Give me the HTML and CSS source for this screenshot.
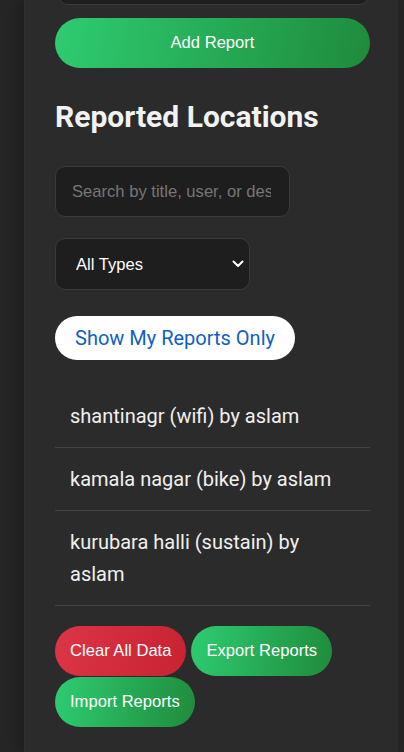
FILE: index.html
```html
<!DOCTYPE html>
<html lang="en">
<head>
<meta charset="utf-8">
<title>Reported Locations</title>
<link rel="stylesheet" href="styles.css">
</head>
<body>
<div class="page">
  <aside class="panel">
    <div class="top-input"></div>
    <button class="btn btn-green btn-wide">Add Report</button>
    <h2 class="heading">Reported Locations</h2>
    <input class="search" type="text" placeholder="Search by title, user, or description">
    <div class="select-wrap">
      <select class="select">
        <option>All Types</option>
      </select>
      <svg class="chev" viewBox="0 0 12 8" width="12" height="8"><path d="M1.5 1.5 L6 6 L10.5 1.5" fill="none" stroke="#fff" stroke-width="2" stroke-linecap="round" stroke-linejoin="round"/></svg>
    </div>
    <button class="toggle">Show My Reports Only</button>
    <ul class="list">
      <li>shantinagr (wifi) by aslam</li>
      <li>kamala nagar (bike) by aslam</li>
      <li>kurubara halli (sustain) by aslam</li>
    </ul>
    <div class="actions">
      <button class="btn btn-red">Clear All Data</button>
      <button class="btn btn-green">Export Reports</button>
      <button class="btn btn-green">Import Reports</button>
    </div>
  </aside>
</div>
</body>
</html>
```
FILE: styles.css
```css
html, body {
  margin: 0;
  padding: 0;
  height: 100%;
  background: #262626;
  overflow: hidden;
}
.page {
  display: flex;
  height: 752px;
}
.panel {
  margin-left: 24px;
  width: 374px;
  box-sizing: border-box;
  padding: 0 29px 0 30px;
  background: #2b2b2b;
  box-shadow: -6px 0 18px rgba(0, 0, 0, 0.25);
  border-left: 1px solid #303030;
  display: flex;
  flex-direction: column;
  align-items: flex-start;
  font-family: Roboto, "Noto Sans", sans-serif;
  color: #eeeeee;
}
.top-input {
  width: 309px;
  height: 10px;
  margin: -7px 0 0 3px;
  border: 1px solid #3b3b3b;
  border-radius: 0 0 10px 10px;
  background: #1e1e1e;
}
.btn {
  border: none;
  color: #ffffff;
  font-family: Arial, "Liberation Sans", sans-serif;
  font-size: 16.6px;
  height: 50px;
  padding: 0 15px;
  border-radius: 25px;
  cursor: pointer;
}
.btn-green {
  background: linear-gradient(100deg, #2ecc71 0%, #1f8b3b 100%);
}
.btn-red {
  background: linear-gradient(100deg, #dc3545 0%, #c82333 100%);
}
.btn-wide {
  margin-top: 13px;
  width: 315px;
}
.heading {
  margin: 29px 0 0;
  font-size: 30px;
  font-weight: 700;
  line-height: 40px;
  color: #f2f2f2;
}
.search {
  margin-top: 29px;
  width: 235px;
  height: 51px;
  box-sizing: border-box;
  padding: 0 18px 0 16px;
  background: #1e1e1e;
  border: 1px solid #3b3b3b;
  border-radius: 10px;
  color: #eee;
  font-family: Arial, "Liberation Sans", sans-serif;
  font-size: 16.6px;
  outline: none;
}
.search::placeholder {
  color: #767676;
}
.select-wrap {
  position: relative;
  margin-top: 21px;
}
.select {
  appearance: none;
  -webkit-appearance: none;
  width: 195px;
  height: 52px;
  box-sizing: border-box;
  padding: 0 20px;
  background: #1e1e1e;
  border: 1px solid #3b3b3b;
  border-radius: 10px;
  color: #ffffff;
  font-family: Arial, "Liberation Sans", sans-serif;
  font-size: 16.6px;
  outline: none;
}
.chev {
  position: absolute;
  right: 6px;
  top: 22px;
  pointer-events: none;
}
.toggle {
  margin-top: 26px;
  height: 44px;
  padding: 0 20px;
  background: #ffffff;
  color: #0f5fc2;
  border: none;
  border-radius: 22px;
  font-family: Roboto, "Noto Sans", sans-serif;
  font-size: 20px;
  cursor: pointer;
}
.list {
  list-style: none;
  margin: 25px 0 0;
  padding: 0;
  width: 315px;
}
.list li {
  padding: 15px;
  font-size: 20px;
  line-height: 32px;
  color: #f0f0f0;
  border-bottom: 1px solid #444444;
}
.actions {
  margin-top: 20px;
  display: flex;
  flex-wrap: wrap;
  column-gap: 5px;
  row-gap: 1px;
  width: 315px;
}
```
